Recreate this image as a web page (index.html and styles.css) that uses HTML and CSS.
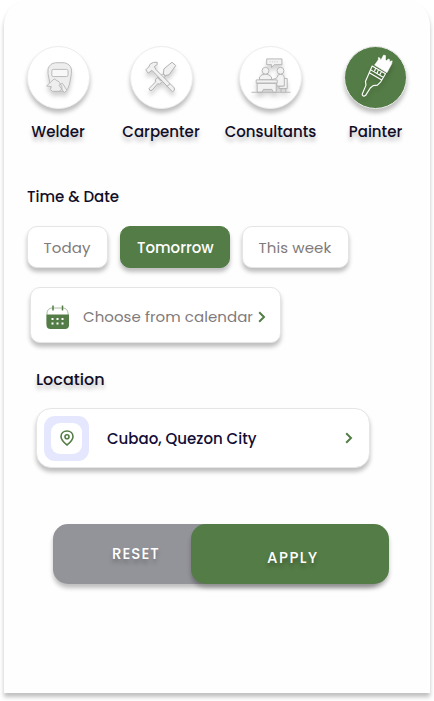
FILE: index.html
```html
<!DOCTYPE html>
<html lang="en">
<head>
<meta charset="utf-8">
<title>Filter</title>
<link rel="stylesheet" href="styles.css">
</head>
<body>
<main class="sheet">
  <nav class="categories">
    <div class="category">
      <div class="disc"><svg viewBox="0 0 64 64" fill="none" stroke="#b9b9b9" stroke-width="1">
        <path fill="#eee" d="M23 38l-2-10v-5q2-6 8-6.500h9q6 1 7.500 6.500v5l-2 11q-1 5-4 7l-4 .5h-8q-4-3-4.500-8.500z"/>
        <rect x="25" y="23.500" width="17" height="7.500" rx="1.500" fill="#f8f8f8"/>
        <path fill="#eee" d="M19.500 41l4-4 4-3.500 5 3 3 5v3l-3 2h-7l-2-2 1-3zM32.500 40l3.500-2 5 7.500-3 2.500z"/>
      </svg></div>
      <span class="label">Welder</span>
    </div>
    <div class="category">
      <div class="disc"><svg viewBox="0 0 64 64" fill="#f1f1f1" stroke="#adadad" stroke-width="1">
        <path d="M19 43.500l7-7-.5-2 3-3 4.500 4.500-3 3-2-.5-6 7q-3 1-3-2zM28.500 33l5-5 2.500 2.500-5 5zM34 28.500l.5-5.500 8.500-7 4 3.500-7 9.500-4 1z"/>
        <path d="M15.500 24l3-3 2-3.500q3-2 7-1.500v2.500l-3 2 1.500 3L45.500 43q1 3-2 4L22 24.500l-4 3zM41 38.500l-3.500 3"/>
      </svg></div>
      <span class="label">Carpenter</span>
    </div>
    <div class="category">
      <div class="disc"><svg viewBox="0 0 64 64" fill="#f2f2f2" stroke="#b4b4b4" stroke-width="1">
        <path d="M28 12.500h16v6h-8l-3 3v-3h-5z"/><path d="M31 15.500h10" stroke-width=".7" stroke-dasharray="1 1.500"/>
        <path d="M20.500 34.500v-3q2-3 6-3t6.500 3v3z"/><circle cx="26.800" cy="24.900" r="3.600"/>
        <path d="M45 33h4.500v10.500H41V41h4zM43 43.500v4m5-4v4"/>
        <path d="M32 34.500l6-1.500 2.500-4q5.500-1 6 3V41H39l-1-4z"/><circle cx="42.500" cy="24.900" r="3.600"/>
        <path d="M17 34.500h22v3.500H17zM18 38h20v9.500h-3l-1.500-3h-9l-1.500 3h-5zM12 47.500h41"/>
      </svg></div>
      <span class="label">Consultants</span>
    </div>
    <div class="category">
      <div class="disc active"><svg viewBox="0 0 64 64" fill="none" stroke="#fff" stroke-width="1.200" stroke-linejoin="round">
        <path fill="#fff" stroke-width=".6" d="M31 19l4-5.500 0-2.500 1.500.5 1 2.500 3-5.500 2 .5v4.500l1 1 2-2 1.500 1-.5 2 3-1-.5 3L44 27z"/>
        <path d="M28.500 20l14 8-5 8.500-3.500 3.500-4.500.5-3 2.500-5 8q-3 1.500-3.500-1.500l4-9.500-.5-4 2-4.500zM25.500 27l13.500 8M27 24l13.500 8M32 22.500l-1 3m4-1.500l-1.500 4m5-2.500l-2 3.500"/>
      </svg></div>
      <span class="label">Painter</span>
    </div>
  </nav>

  <h2 class="heading time">Time &amp; Date</h2>
  <div class="days">
    <button class="day today"><span>Today</span></button>
    <button class="day tomorrow"><span>Tomorrow</span></button>
    <button class="day week"><span>This week</span></button>
  </div>

  <button class="calendar">
    <svg class="calendar-icon" viewBox="0 0 24 25">
      <rect x="1" y="3" width="21" height="20" rx="5" fill="#fff" stroke="#a9bea2"/>
      <path d="M.500 9.500h22.500V20q0 4-4 4h-14.500q-4 0-4-4z" fill="#547c46"/>
      <path d="M7 .5v5M16.500 .5v5" stroke="#547c46" stroke-width="1.500"/>
      <path d="M5.500 14h2m3 0h2m3 0h2M5.500 18.500h2m3 0h2m3 0h2" stroke="#fff" stroke-width="2"/>
    </svg>
    <span class="calendar-text">Choose from calendar</span>
    <svg class="chevron" viewBox="0 0 8 12"><path d="M1.200 1.200L6 6l-4.800 4.800"/></svg>
  </button>

  <h2 class="heading location">Location</h2>
  <button class="place">
    <span class="pin"><span class="pin-inner"><svg viewBox="0 0 14 16"><path d="M7 1C3.500 1 1 3.500 1 6.700 1 10 3.500 12 7 15c3.500-3 6-5 6-8.300C13 3.500 10.500 1 7 1z"/><circle cx="7" cy="6.800" r="2"/></svg></span></span>
    <span class="place-text">Cubao, Quezon City</span>
    <svg class="chevron" viewBox="0 0 8 12"><path d="M1.200 1.200L6 6l-4.800 4.800"/></svg>
  </button>

  <div class="actions">
    <button class="reset"><span>RESET</span></button>
    <button class="apply"><span>APPLY</span></button>
  </div>
</main>
</body>
</html>
```
FILE: styles.css
```css
* { box-sizing: border-box; }
body { margin: 0; background: #fff; font-family: Poppins, Inter, sans-serif; color: #120d26; height: 701px; overflow: hidden; }
button { margin: 0; padding: 0; border: 0; font: inherit; text-align: left; }
svg { display: block; flex: none; }
.sheet { width: 426px; height: 693px; margin-left: 4px; padding-top: 46px; background: #fefefe; border-radius: 25px 25px 0 0; box-shadow: 0 4px 4px rgba(0,0,0,.25); }
.categories { display: grid; grid-template-columns: 102px 104px 115px 95px; margin-left: 3px; height: 139px; }
.category { display: flex; flex-direction: column; align-items: center; }
.disc { width: 63px; height: 63px; border-radius: 50%; background: #fff; border: 1px solid #ededed; box-shadow: 0 4px 4px rgba(0,0,0,.25); }
.disc svg { width: 61px; height: 61px; filter: drop-shadow(0 4px 2px rgba(0,0,0,.18)); }
.disc.active { background: #547c46; }
.label { margin-top: 13px; font-size: 15px; line-height: 20px; font-weight: 500; white-space: nowrap; text-shadow: 0 4px 4px rgba(0,0,0,.25); }
.heading { margin: 0; font-size: 15px; line-height: 24px; font-weight: 500; }
.time { margin-left: 23px; }
.days { display: flex; gap: 12px; margin: 17px 0 0 23px; height: 42px; }
.day { border: 1px solid #e5e5e5; border-radius: 10px; background: #fff; box-shadow: 0 4px 4px rgba(0,0,0,.25); color: #807a7a; font-size: 15px; line-height: 42px; padding-left: 15.5px; white-space: nowrap; letter-spacing: .1px; }
.today { width: 81px; }
.tomorrow { width: 110px; background: #547c46; border-color: #547c46; color: #fff; padding-left: 16px; font-weight: 500; letter-spacing: 0; }
.week { width: 107px; }
.calendar { display: flex; align-items: center; width: 251px; height: 56px; margin: 19px 0 0 26px; padding-left: 14.5px; background: #fff; border: 1px solid #e5e5e5; border-radius: 10px; box-shadow: 0 4px 4px rgba(0,0,0,.25); color: #807a7a; font-size: 15px; }
.calendar-icon { width: 24px; height: 25px; margin-top: 4px; }
.calendar-text { width: 175px; margin: 3px 0 0 13.5px; white-space: nowrap; letter-spacing: .06px; }
.calendar .chevron { margin-top: 4px; }
.chevron { width: 8px; height: 12px; fill: none; stroke: #547c46; stroke-width: 2; }
.location { margin: 25px 0 0 32px; font-size: 16px; text-shadow: 0 4px 4px rgba(0,0,0,.25); }
.place { display: flex; align-items: center; width: 334px; height: 60px; margin: 16px 0 0 32px; padding-left: 7px; background: #fff; border: 1px solid #e5e5e5; border-radius: 15px; box-shadow: 0 4px 4px rgba(0,0,0,.25); color: #120d36; font-size: 15px; font-weight: 500; }
.pin { display: grid; place-items: center; width: 45px; height: 45px; border-radius: 11px; background: #e5e7ff; }
.pin-inner { display: grid; place-items: center; width: 31px; height: 31px; border-radius: 9px; background: #fff; }
.pin svg { width: 14px; height: 16px; fill: none; stroke: #547c46; stroke-width: 1.6; }
.place-text { width: 238px; margin: 0 0 0 18px; white-space: nowrap; }
.actions { display: flex; margin: 56px 0 0 49px; height: 60px; }
.actions button { flex: none; color: #fff; font-size: 15px; font-weight: 500; text-shadow: 0 4px 4px rgba(0,0,0,.25); box-shadow: 0 4px 4px rgba(0,0,0,.25); border-radius: 15px; }
.actions .reset { width: 330px; padding: 0 0 2px 59px; background: #939499; letter-spacing: 1px; }
.actions .apply { width: 198px; margin-left: -192px; padding: 6px 0 0 76px; background: #547c46; letter-spacing: 1.5px; }
```
